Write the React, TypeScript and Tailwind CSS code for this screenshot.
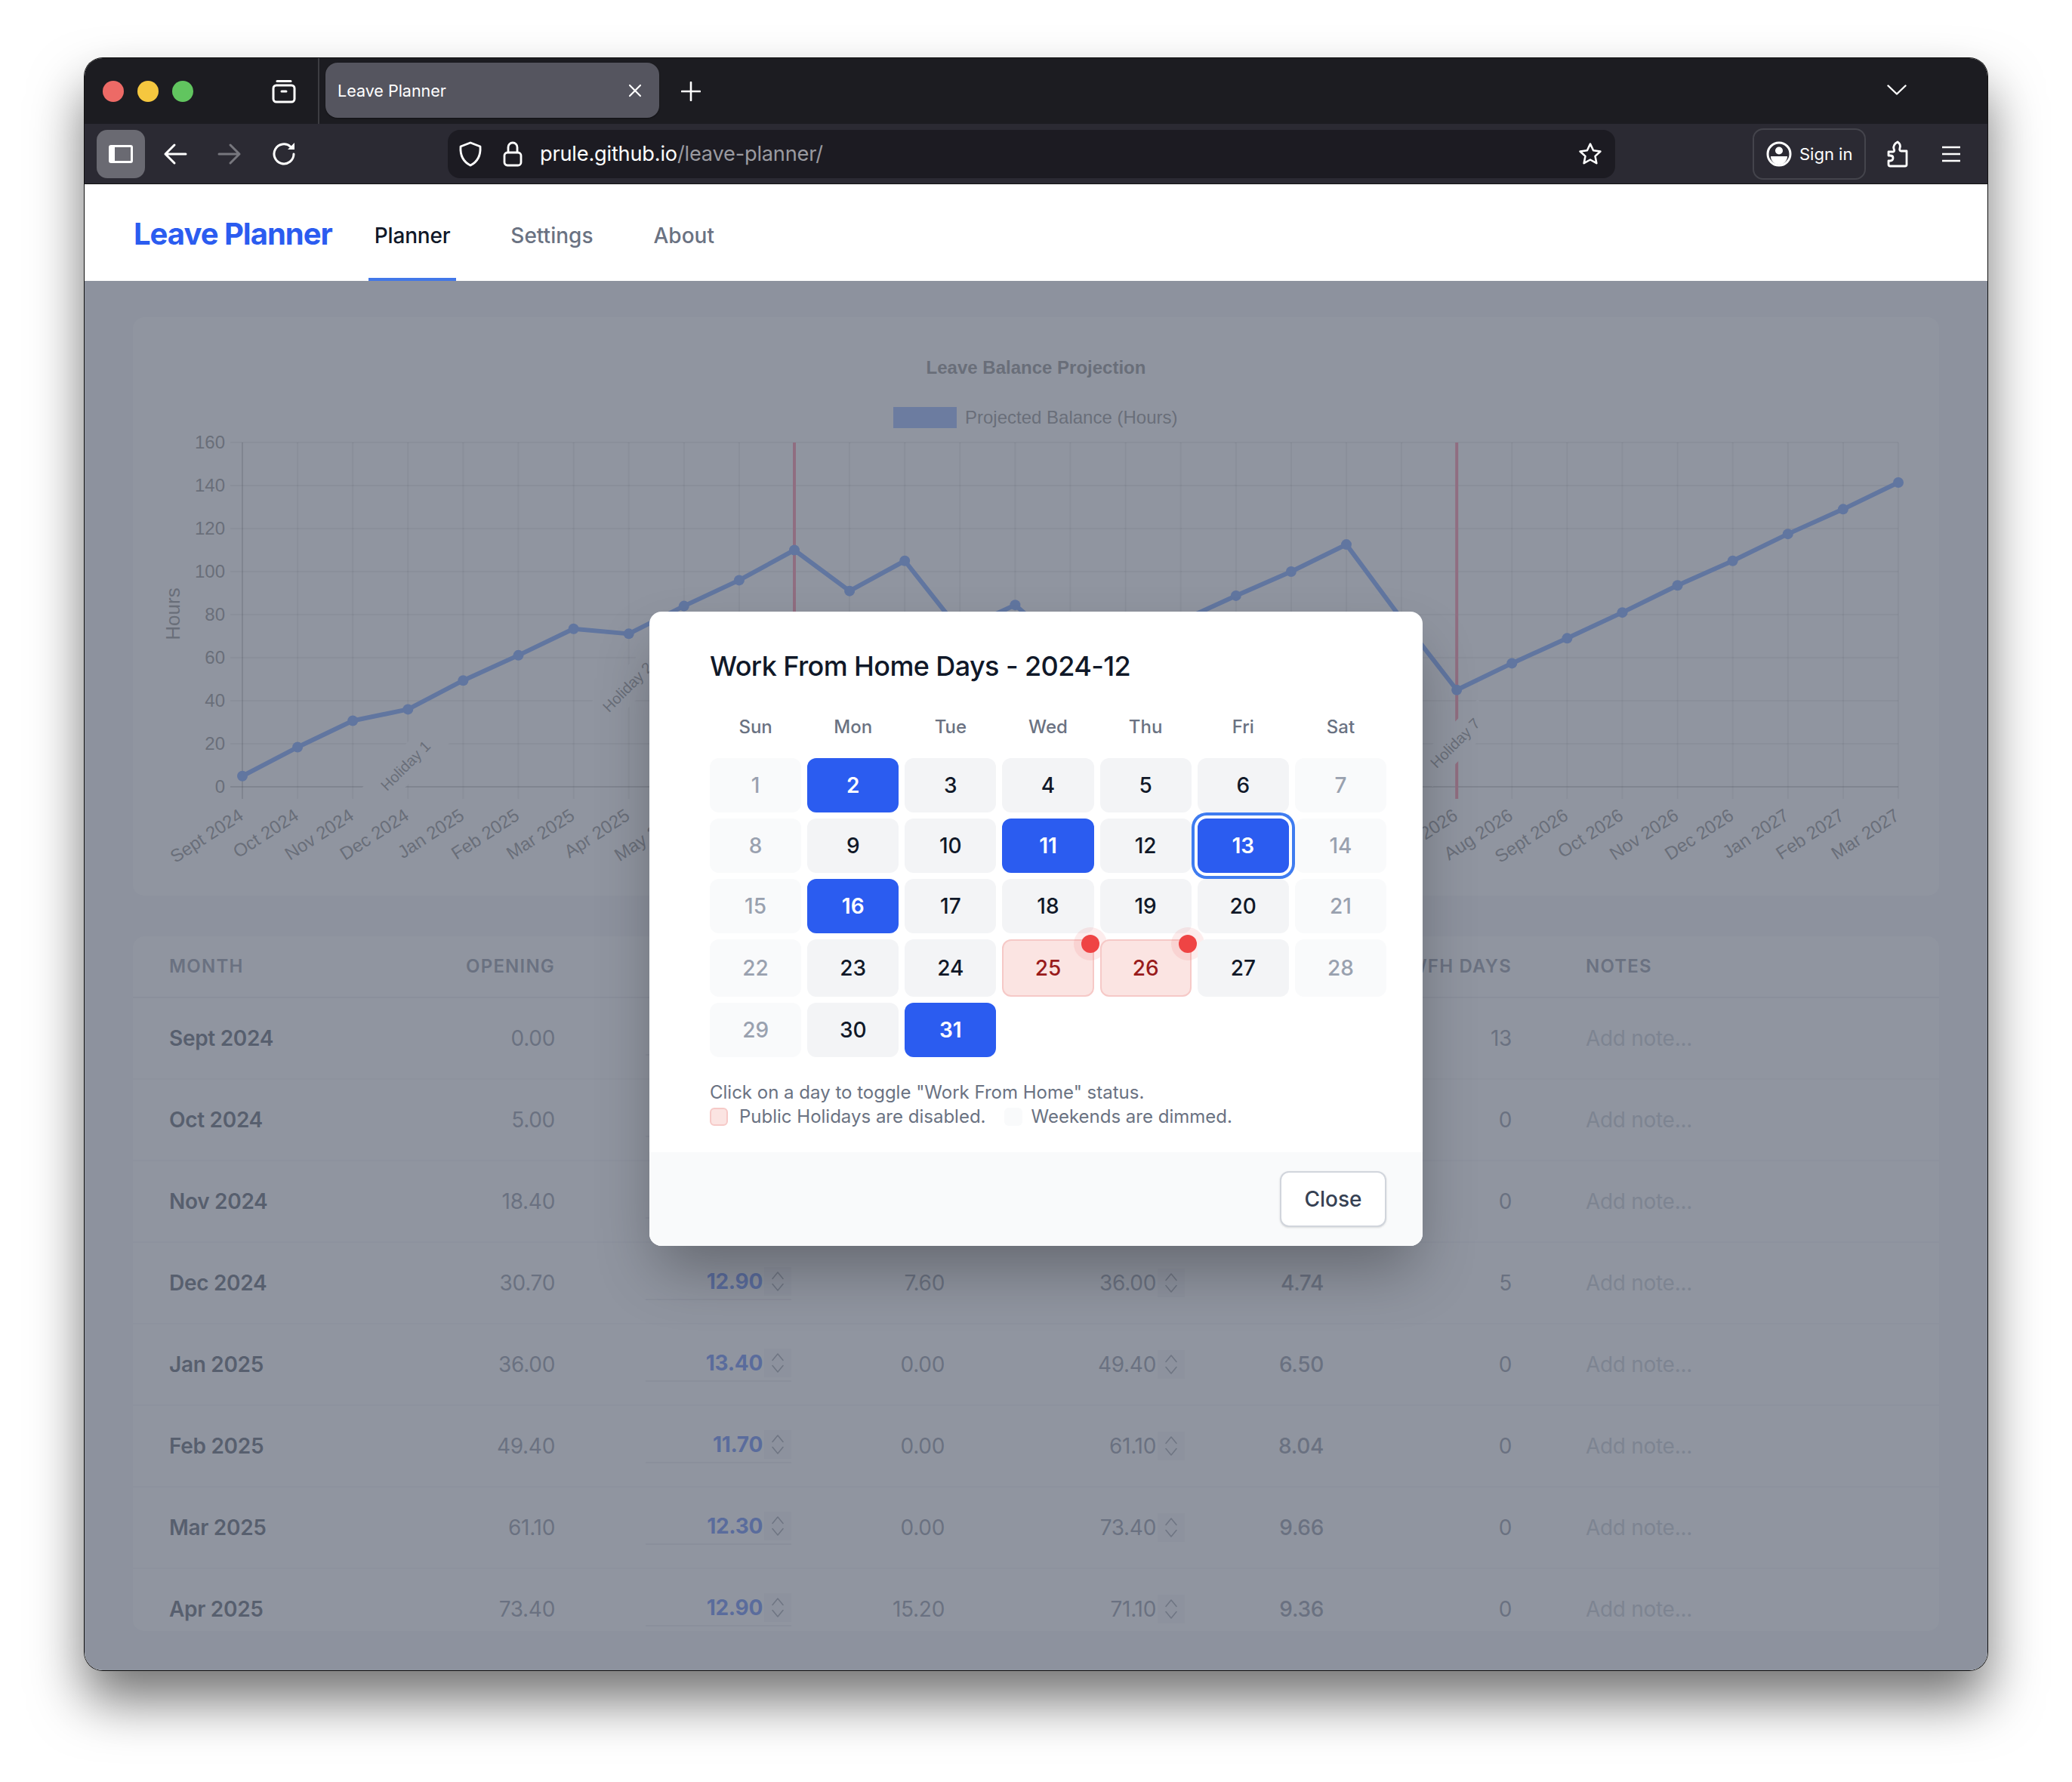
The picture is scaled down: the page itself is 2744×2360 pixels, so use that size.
const months = ["Sept 2024","Oct 2024","Nov 2024","Dec 2024","Jan 2025","Feb 2025","Mar 2025","Apr 2025","May 2025","Jun 2025","Jul 2025","Aug 2025","Sept 2025","Oct 2025","Nov 2025","Dec 2025","Jan 2026","Feb 2026","Mar 2026","Apr 2026","May 2026","Jun 2026","Jul 2026","Aug 2026","Sept 2026","Oct 2026","Nov 2026","Dec 2026","Jan 2027","Feb 2027","Mar 2027"]
const balance = [5,18.4,30.7,36,49.4,61.1,73.4,71.1,84,96,110,91,105,72.6,84.5,62,58,77,88.8,100,112.6,78,45,57.4,69,81,93.6,105,117.5,129,141.4]
const X = (i: number) => 145 + 73.1 * i
const Y = (v: number) => 622 - 2.85 * v

const rows = [
  { month: "Sept 2024", opening: "0.00", accrued: "5.00", taken: "0.00", closing: "5.00", days: "0.66", wfh: "13" },
  { month: "Oct 2024", opening: "5.00", accrued: "13.40", taken: "0.00", closing: "18.40", days: "2.42", wfh: "0" },
  { month: "Nov 2024", opening: "18.40", accrued: "12.30", taken: "0.00", closing: "30.70", days: "4.04", wfh: "0" },
  { month: "Dec 2024", opening: "30.70", accrued: "12.90", taken: "7.60", closing: "36.00", days: "4.74", wfh: "5" },
  { month: "Jan 2025", opening: "36.00", accrued: "13.40", taken: "0.00", closing: "49.40", days: "6.50", wfh: "0" },
  { month: "Feb 2025", opening: "49.40", accrued: "11.70", taken: "0.00", closing: "61.10", days: "8.04", wfh: "0" },
  { month: "Mar 2025", opening: "61.10", accrued: "12.30", taken: "0.00", closing: "73.40", days: "9.66", wfh: "0" },
  { month: "Apr 2025", opening: "73.40", accrued: "12.90", taken: "15.20", closing: "71.10", days: "9.36", wfh: "0" },
]

const weekdays = ["Sun", "Mon", "Tue", "Wed", "Thu", "Fri", "Sat"]
const wfhDays = [2, 11, 13, 16, 31]
const holidays = [25, 26]
const tableCols = "grid grid-cols-[300px_211px_313px_203px_318px_184px_249px_1fr] items-center pl-[48px]"

const Spinner = () => (
  <div className="flex flex-col items-center justify-center gap-[4px] w-[36px] h-[38px] ml-[2px] bg-gray-100">
    <svg width="18" height="12" viewBox="0 0 18 12" fill="none" stroke="#7b818d" strokeWidth="1.600" strokeLinecap="round" strokeLinejoin="round">
      <path d="M2 10.500L9 2l7 8.500" />
    </svg>
    <svg width="18" height="12" viewBox="0 0 18 12" fill="none" stroke="#7b818d" strokeWidth="1.600" strokeLinecap="round" strokeLinejoin="round">
      <path d="M2 1.500L9 10l7-8.500" />
    </svg>
  </div>
)

const BrowserChrome = () => (
  <>
    <div className="h-[87px] bg-[#1c1c21] flex items-center shrink-0">
      <div className="flex items-center gap-[18px] pl-[24px] w-[210px]">
        <div className="w-[28px] h-[28px] rounded-full bg-[#ed6a66]" />
        <div className="w-[28px] h-[28px] rounded-full bg-[#f5c73f]" />
        <div className="w-[28px] h-[28px] rounded-full bg-[#61c55f]" />
      </div>
      <svg width="36" height="36" viewBox="0 0 36 36" fill="none" stroke="white" strokeWidth="3" className="ml-[36px] mt-[-2px]">
        <path d="M9 5.500h18" strokeLinecap="round" />
        <rect x="4" y="11" width="28" height="22" rx="4" />
        <path d="M15 19h6" strokeLinecap="round" />
      </svg>
      <div className="w-[2px] h-full bg-[#3d3d42] ml-[27px]" />
      <div className="ml-[8px] w-[442px] h-[73px] mt-[-2px] rounded-[16px] bg-[#55555f] flex items-center pl-[16px] pr-[23px] shadow-[0_1px_2px_rgba(0,0,0,0.4)]">
        <span className="pt-[2px] text-white text-[21.500px] font-['Inter',sans-serif]">Leave Planner</span>
        <svg width="18" height="18" viewBox="0 0 18 18" stroke="white" strokeWidth="2.200" strokeLinecap="round" className="ml-auto">
          <path d="M2 2l14 14M16 2L2 16" />
        </svg>
      </div>
      <svg width="26" height="26" viewBox="0 0 26 26" stroke="white" strokeWidth="2.600" strokeLinecap="round" className="ml-[29px]">
        <path d="M13 1v24M1 13h24" />
      </svg>
      <svg width="26" height="14" viewBox="0 0 26 14" fill="none" stroke="white" strokeWidth="2.400" strokeLinecap="round" strokeLinejoin="round" className="ml-auto mr-[107px] mt-[-3px]">
        <path d="M1.500 1.500L13 12.500L24.500 1.500" />
      </svg>
    </div>
    <div className="h-[80px] bg-[#2b2a33] flex items-center shrink-0 border-b border-[#111]">
      <div className="ml-[16px] w-[64px] h-[64px] rounded-[14px] bg-[#6a6a72] flex items-center justify-center">
        <div className="w-[32px] h-[24px] rounded-[3px] border-[3px] border-l-[8px] border-white" />
      </div>
      <svg width="32" height="30" viewBox="0 0 32 30" fill="none" stroke="white" strokeWidth="3" strokeLinecap="round" strokeLinejoin="round" className="ml-[24px]">
        <path d="M30 15H3M15 3L3 15l12 12" />
      </svg>
      <svg width="32" height="30" viewBox="0 0 32 30" fill="none" stroke="#77777e" strokeWidth="3" strokeLinecap="round" strokeLinejoin="round" className="ml-[40px]">
        <path d="M2 15h27M17 3l12 12-12 12" />
      </svg>
      <svg width="34" height="34" viewBox="0 0 34 34" fill="none" stroke="white" strokeWidth="3" strokeLinecap="round" className="ml-[40px]">
        <path d="M29 17a13 13 0 1 1-4-9.500" />
        <path d="M30 2v9h-9z" fill="white" stroke="none" />
      </svg>
      <div className="ml-[199px] w-[1546px] h-[64px] rounded-[16px] bg-[#1c1b22] flex items-center pl-[14px] pr-[16px] font-['Inter',sans-serif]">
        <svg width="32" height="34" viewBox="0 0 32 34" fill="none" stroke="white" strokeWidth="2.800" strokeLinejoin="round">
          <path d="M16 2l13 5c0.600 9-1 19-13 25C4 26 2.400 16 3 7z" />
        </svg>
        <svg width="26" height="34" viewBox="0 0 26 34" fill="none" stroke="white" strokeWidth="2.800" className="ml-[27px]">
          <rect x="2" y="15" width="22" height="17" rx="4" />
          <path d="M7 15V8a6 6 0 0 1 12 0v7" />
        </svg>
        <span className="ml-[23px] pt-[2px] text-[27.200px] tracking-[-0.2px] text-white">prule.github.io<span className="text-[#9a9aa0]">/leave-planner/</span></span>
        <svg width="34" height="34" viewBox="0 0 24 24" fill="none" stroke="white" strokeWidth="1.800" strokeLinejoin="round" className="ml-auto">
          <path d="M12 2.500l2.900 6.200 6.600.8-4.900 4.500 1.300 6.600L12 17.300l-5.900 3.300 1.300-6.600-4.900-4.500 6.600-.8z" />
        </svg>
      </div>
      <div className="ml-[182px] w-[150px] h-[68px] rounded-[14px] border-2 border-[#44444c] flex items-center pl-[16px] font-['Inter',sans-serif]">
        <svg width="34" height="34" viewBox="0 0 34 34" fill="none" className="shrink-0">
          <circle cx="17" cy="17" r="15" stroke="white" strokeWidth="3" />
          <circle cx="17" cy="12.500" r="5" fill="white" />
          <path d="M6 20h22a11 11 0 0 1-22 0z" fill="white" />
        </svg>
        <span className="ml-[10px] pt-[1px] text-[22px] text-white whitespace-nowrap">Sign in</span>
      </div>
      <svg width="30" height="36" viewBox="0 0 30 36" fill="none" stroke="white" strokeWidth="2.800" strokeLinejoin="round" className="ml-[27px]">
        <path d="M3 15h6c2 0 2-2 1-4-1-3 1-7 5-9 3 2 4 5 3 8-.5 2-.5 4 1.500 4H27v18a2 2 0 0 1-2 2H5c-2 0-2-1.500-2-3v-4h2c3 0 4-2 4-4s-2-3-4-3H3z" />
      </svg>
      <svg width="26" height="22" viewBox="0 0 26 22" stroke="white" strokeWidth="2.600" className="ml-[43px]">
        <path d="M1 2h24M1 11h24M1 20h24" />
      </svg>
    </div>
  </>
)

const ChartCard = () => (
  <div className="h-[768px] rounded-[16px] bg-white border-b-2 border-gray-100 shrink-0 overflow-hidden">
    <svg width="2392" height="768" viewBox="0 0 2392 768" className="font-['Liberation_Sans',sans-serif]">
      <text x="1196" y="75" textAnchor="middle" fontSize="24" fontWeight="700" fill="#666">Leave Balance Projection</text>
      <rect x="1007" y="119" width="84" height="28" fill="#6f9bff" />
      <text x="1102" y="141" fontSize="24" fill="#666">Projected Balance (Hours)</text>

      {[0, 20, 40, 60, 80, 100, 120, 140, 160].map((v) => (
        <g key={v}>
          <line x1="129" x2="2338" y1={Y(v)} y2={Y(v)} stroke={v === 0 ? "rgba(0,0,0,0.25)" : "rgba(0,0,0,0.1)"} strokeWidth="2" />
          <text x="122" y={Y(v) + 8} textAnchor="end" fontSize="24" fill="#666">{v}</text>
        </g>
      ))}
      {months.map((m, i) => (
        <g key={m}>
          <line x1={X(i)} x2={X(i)} y1="166" y2="638" stroke={i === 0 ? "rgba(0,0,0,0.25)" : "rgba(0,0,0,0.1)"} strokeWidth="2" />
          <text x={X(i) + 3} y="664" textAnchor="end" fontSize="24" fill="#666" transform={`rotate(-33 ${X(i) + 3} 664)`}>{m}</text>
        </g>
      ))}
      <text x="62" y="393" textAnchor="middle" fontSize="26" fill="#666" transform="rotate(-90 62 393)">Hours</text>

      <line x1={X(10)} x2={X(10)} y1="166" y2="638" stroke="#ff6384" strokeWidth="4" />
      <line x1={X(22)} x2={X(22)} y1="166" y2="638" stroke="#ff6384" strokeWidth="4" />

      {[
        { label: "Holiday 1", x: 361, y: 594 },
        { label: "Holiday 2", x: 655, y: 490 },
        { label: "Holiday 7", x: 1751, y: 564 },
      ].map((h) => (
        <g key={h.label} transform={`rotate(-45 ${h.x} ${h.y})`}>
          <rect x={h.x - 62} y={h.y - 20} width="124" height="40" fill="white" />
          <text x={h.x} y={h.y + 7} textAnchor="middle" fontSize="20" fill="#666">{h.label}</text>
        </g>
      ))}

      <polyline points={balance.map((v, i) => `${X(i)},${Y(v)}`).join(" ")} fill="none" stroke="#4682ff" strokeWidth="6" strokeLinejoin="round" />
      {balance.map((v, i) => (
        <circle key={i} cx={X(i)} cy={Y(v)} r="7" fill="#4682ff" />
      ))}
    </svg>
  </div>
)

const LeaveTable = () => (
  <div className="mt-[52px] h-[922px] rounded-[16px] bg-white overflow-hidden border-b-2 border-gray-100 shrink-0 font-['Inter',sans-serif]">
    <div className={`${tableCols} h-[82px] border-b-2 border-gray-200 text-[24px] font-semibold tracking-[1.2px] text-gray-500`}>
      <div>MONTH</div>
      <div className="text-right">OPENING</div>
      <div className="text-right">ACCRUED</div>
      <div className="text-right">TAKEN</div>
      <div className="text-right pr-[36px]">CLOSING</div>
      <div className="text-right">DAYS</div>
      <div className="text-right">WFH DAYS</div>
      <div className="pl-[98px]">NOTES</div>
    </div>
    {rows.map((r) => (
      <div key={r.month} className={`${tableCols} h-[108px] border-b-2 border-gray-100 text-[28px] tracking-[-0.3px] text-gray-500 shrink-0`}>
        <div className="font-semibold text-gray-800">{r.month}</div>
        <div className="text-right">{r.opening}</div>
        <div className="flex justify-end">
          <div className="w-[193px] flex justify-end items-center border-b-2 border-gray-200 pb-[2px] font-bold text-[#2b5cf0]">
            {r.accrued}
            <Spinner />
          </div>
        </div>
        <div className="text-right">{r.taken}</div>
        <div className="flex justify-end items-center">
          {r.closing}
          <Spinner />
        </div>
        <div className="text-right font-medium">{r.days}</div>
        <div className="text-right">{r.wfh}</div>
        <div className="pl-[98px] text-[#b4bac4]">Add note...</div>
      </div>
    ))}
  </div>
)

const DayCell = ({ day }: { day: number }) => {
  const dow = (day + 6) % 7
  const weekend = dow === 0 || dow === 6
  const holiday = holidays.includes(day)
  const wfh = wfhDays.includes(day)
  let cls = "bg-gray-100 text-gray-900"
  if (weekend) cls = "bg-gray-50 text-gray-400"
  if (holiday) cls = "bg-[#fbe4e2] text-[#991b1b] border-2 border-[#f6c9c7] min-h-[76px]"
  if (wfh) cls = "bg-[#2b5cf0] text-white font-semibold"
  if (day === 13) cls += " ring-[4px] ring-[#3f7cf0] ring-offset-[4px] ring-offset-white"
  return (
    <div className={`relative min-h-[72px] rounded-[12px] flex items-center justify-center text-[28px] font-medium ${cls}`}>
      {day}
      {holiday && (
        <div className="absolute top-[-8px] right-[-9px] w-[24px] h-[24px] rounded-full bg-[#ef4444] shadow-[0_0_0_10px_rgba(239,68,68,0.1)]" />
      )}
    </div>
  )
}

const Modal = () => (
  <div className="w-[1024px] rounded-[16px] bg-white overflow-hidden shadow-[0_40px_80px_-10px_rgba(0,0,0,0.3)] font-['Inter',sans-serif]">
    <div className="pt-[48px] pl-[80px] pr-[48px] pb-[32px] h-[716px]">
      <h2 className="text-[36px] leading-[48px] tracking-[-0.6px] font-medium text-gray-900">Work From Home Days - 2024-12</h2>
      <div className="mt-[41px] grid grid-cols-7 gap-[8px]">
        {weekdays.map((d) => (
          <div key={d} className="h-[48px] text-center text-[24px] leading-[32px] font-medium text-gray-500">{d}</div>
        ))}
      </div>
      <div className="mt-[9px] grid grid-cols-7 gap-[8px] relative">
        {Array.from({ length: 31 }, (_, i) => i + 1).map((day) => (
          <DayCell key={day} day={day} />
        ))}
      </div>
      <div className="mt-[31px] text-[24px] leading-[32px] text-gray-500">
        <p>Click on a day to toggle "Work From Home" status.</p>
        <p className="flex items-center">
          <span className="w-[24px] h-[24px] rounded-[6px] bg-[#fbe4e2] border-2 border-[#f6c9c7]" />
          <span className="ml-[15px]">Public Holidays are disabled.</span>
          <span className="ml-[24px] w-[24px] h-[24px] rounded-[6px] bg-gray-50" />
          <span className="ml-[12px]">Weekends are dimmed.</span>
        </p>
      </div>
    </div>
    <div className="h-[124px] bg-gray-50 flex items-center justify-end pr-[48px]">
      <div className="w-[141px] h-[74px] rounded-[12px] bg-white border-2 border-gray-300 shadow-sm flex items-center justify-center text-[28px] font-medium text-gray-700">Close</div>
    </div>
  </div>
)

const App = () => (
  <div className="w-[2744px] h-[2360px] bg-white pt-[77px] pl-[112px] overflow-hidden">
    <div className="w-[2520px] h-[2135px] rounded-[24px] overflow-hidden flex flex-col relative shadow-[0_0_0_1px_#111,0_40px_70px_rgba(0,0,0,0.55)]">
      <BrowserChrome />
      <div className="h-[128px] bg-white flex items-center pl-[65px] shrink-0 relative z-10 font-['Inter',sans-serif]">
        <span className="mt-[3px] text-[40px] font-bold tracking-[-1px] text-[#2b5cf0]">Leave Planner</span>
        <nav className="ml-[48px] flex gap-[64px] h-full">
          <a className="relative flex items-center px-[8px] pt-[8px] text-[28px] tracking-[-0.2px] font-medium text-gray-900">
            Planner
            <span className="absolute left-0 right-0 bottom-0 h-[4px] bg-[#4277e8]" />
          </a>
          <a className="flex items-center px-[8px] pt-[8px] text-[28px] font-medium text-gray-500">Settings</a>
          <a className="flex items-center px-[8px] pt-[8px] text-[28px] font-medium text-gray-500">About</a>
        </nav>
      </div>
      <main className="flex-1 relative bg-gray-100 px-[64px] pt-[48px] overflow-hidden flex flex-col">
        <ChartCard />
        <LeaveTable />
        <div className="absolute inset-0 bg-[#6b7280]/75" />
      </main>
      <div className="absolute top-[170px] bottom-0 left-0 right-0 flex items-center justify-center z-20">
        <Modal />
      </div>
    </div>
  </div>
)

export default App
